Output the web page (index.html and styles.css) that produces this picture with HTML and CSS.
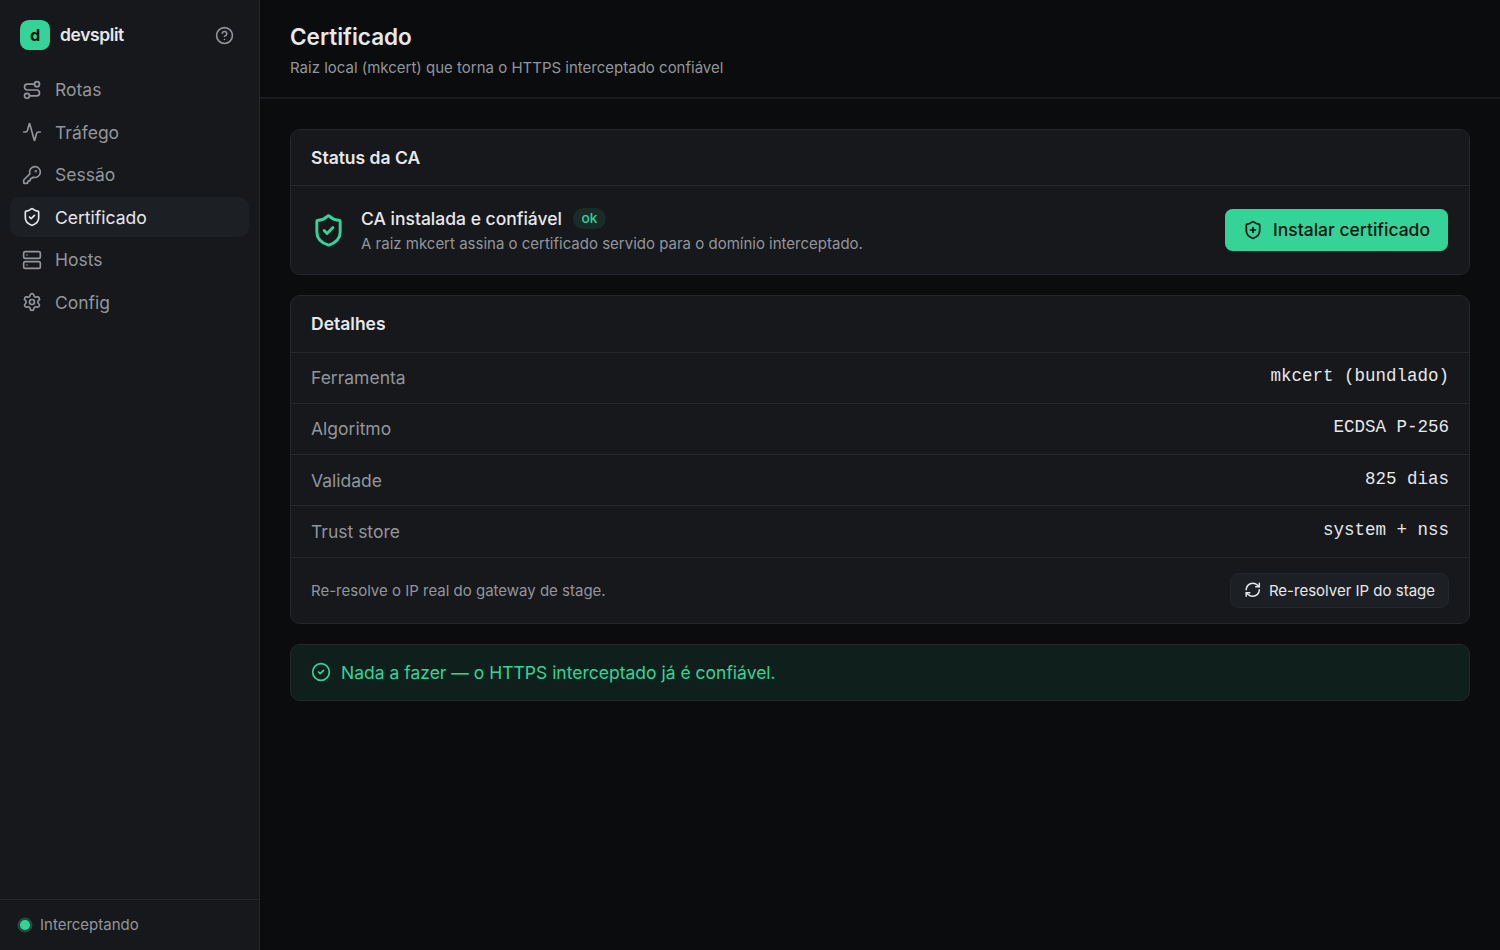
FILE: index.html
```html
<!DOCTYPE html>
<html lang="pt-BR">
<head>
<meta charset="utf-8">
<title>devsplit</title>
<link rel="stylesheet" href="styles.css">
</head>
<body>
<div class="app">
  <aside class="sidebar">
    <div class="brand">
      <span class="logo">d</span>
      <span class="brand-name">devsplit</span>
      <svg class="icon help" viewBox="0 0 24 24"><circle cx="12" cy="12" r="10"/><path d="M9.09 9a3 3 0 0 1 5.83 1c0 2-3 3-3 3"/><path d="M12 17h.01"/></svg>
    </div>
    <nav class="nav">
      <a class="nav-item"><svg class="icon" viewBox="0 0 24 24"><circle cx="6" cy="19" r="3"/><path d="M9 19h8.5a3.5 3.5 0 0 0 0-7h-11a3.5 3.5 0 0 1 0-7H15"/><circle cx="18" cy="5" r="3"/></svg>Rotas</a>
      <a class="nav-item"><svg class="icon" viewBox="0 0 24 24"><path d="M22 12h-2.48a2 2 0 0 0-1.93 1.46l-2.35 8.36a.25.25 0 0 1-.48 0L9.24 2.18a.25.25 0 0 0-.48 0l-2.35 8.36A2 2 0 0 1 4.49 12H2"/></svg>Tráfego</a>
      <a class="nav-item"><svg class="icon" viewBox="0 0 24 24"><path d="M2.586 17.414A2 2 0 0 0 2 18.828V21a1 1 0 0 0 1 1h3a1 1 0 0 0 1-1v-1a1 1 0 0 1 1-1h1a1 1 0 0 0 1-1v-1a1 1 0 0 1 1-1h.172a2 2 0 0 0 1.414-.586l.814-.814a6.5 6.5 0 1 0-4-4z"/><circle cx="16.5" cy="7.5" r=".5" fill="currentColor"/></svg>Sessão</a>
      <a class="nav-item active"><svg class="icon" viewBox="0 0 24 24"><path d="M20 13c0 5-3.5 7.5-7.66 8.95a1 1 0 0 1-.67-.01C7.5 20.5 4 18 4 13V6a1 1 0 0 1 1-1c2 0 4.5-1.2 6.24-2.72a1.17 1.17 0 0 1 1.52 0C14.51 3.81 17 5 19 5a1 1 0 0 1 1 1z"/><path d="m9 12 2 2 4-4"/></svg>Certificado</a>
      <a class="nav-item"><svg class="icon" viewBox="0 0 24 24"><rect width="20" height="8" x="2" y="2" rx="2"/><rect width="20" height="8" x="2" y="14" rx="2"/><path d="M6 6h.01M6 18h.01"/></svg>Hosts</a>
      <a class="nav-item"><svg class="icon" viewBox="0 0 24 24"><path d="M9.671 4.136a2.34 2.34 0 0 1 4.659 0 2.34 2.34 0 0 0 3.319 1.915 2.34 2.34 0 0 1 2.33 4.033 2.34 2.34 0 0 0 0 3.831 2.34 2.34 0 0 1-2.33 4.033 2.34 2.34 0 0 0-3.319 1.915 2.34 2.34 0 0 1-4.659 0 2.34 2.34 0 0 0-3.32-1.915 2.34 2.34 0 0 1-2.33-4.033 2.34 2.34 0 0 0 0-3.831A2.34 2.34 0 0 1 6.35 6.051a2.34 2.34 0 0 0 3.319-1.915"/><circle cx="12" cy="12" r="3"/></svg>Config</a>
    </nav>
    <div class="status"><span class="dot"></span><span class="status-text">Interceptando</span></div>
  </aside>
  <main class="main">
    <header class="page-header">
      <h1 class="title">Certificado</h1>
      <p class="subtitle">Raiz local (mkcert) que torna o HTTPS interceptado confiável</p>
    </header>
    <div class="content">
      <section class="card">
        <h2 class="card-title">Status da CA</h2>
        <div class="ca">
          <svg class="icon ca-icon" viewBox="0 0 24 24"><path d="M20 13c0 5-3.5 7.5-7.66 8.95a1 1 0 0 1-.67-.01C7.5 20.5 4 18 4 13V6a1 1 0 0 1 1-1c2 0 4.5-1.2 6.24-2.72a1.17 1.17 0 0 1 1.52 0C14.51 3.81 17 5 19 5a1 1 0 0 1 1 1z"/><path d="m9 12 2 2 4-4"/></svg>
          <div class="ca-text">
            <div class="ca-line">CA instalada e confiável<span class="badge">ok</span></div>
            <div class="ca-note">A raiz mkcert assina o certificado servido para o domínio interceptado.</div>
          </div>
          <button class="btn primary"><svg class="icon" viewBox="0 0 24 24"><path d="M20 13c0 5-3.5 7.5-7.66 8.95a1 1 0 0 1-.67-.01C7.5 20.5 4 18 4 13V6a1 1 0 0 1 1-1c2 0 4.5-1.2 6.24-2.72a1.17 1.17 0 0 1 1.52 0C14.51 3.81 17 5 19 5a1 1 0 0 1 1 1z"/><path d="M9 12h6M12 9v6"/></svg>Instalar certificado</button>
        </div>
      </section>
      <section class="card">
        <h2 class="card-title details-title">Detalhes</h2>
        <div class="row"><span class="key">Ferramenta</span><span class="value">mkcert (bundlado)</span></div>
        <div class="row"><span class="key">Algoritmo</span><span class="value">ECDSA P-256</span></div>
        <div class="row"><span class="key">Validade</span><span class="value">825 dias</span></div>
        <div class="row"><span class="key">Trust store</span><span class="value">system + nss</span></div>
        <div class="row-action">
          <span>Re-resolve o IP real do gateway de stage.</span>
          <button class="btn secondary"><svg class="icon" viewBox="0 0 24 24"><path d="M3 12a9 9 0 0 1 9-9 9.75 9.75 0 0 1 6.74 2.74L21 8"/><path d="M21 3v5h-5"/><path d="M21 12a9 9 0 0 1-9 9 9.75 9.75 0 0 1-6.74-2.74L3 16"/><path d="M8 16H3v5"/></svg>Re-resolver IP do stage</button>
        </div>
      </section>
      <section class="card banner">
        <svg class="icon" viewBox="0 0 24 24"><circle cx="12" cy="12" r="10"/><path d="m9 12 2 2 4-4"/></svg>
        <span>Nada a fazer — o HTTPS interceptado já é confiável.</span>
      </section>
    </div>
  </main>
</div>
</body>
</html>
```
FILE: styles.css
```css
* { box-sizing: border-box; }
body {
  margin: 0;
  background: #0b0c0e;
  color: #e6e8eb;
  font: 17.5px/25px Inter, "Liberation Sans", sans-serif;
}
h1, h2, p { margin: 0; }
.app { display: flex; height: 950px; overflow: hidden; }
.icon {
  width: 20px; height: 20px; flex: none;
  fill: none; stroke: currentColor; stroke-width: 2;
  stroke-linecap: round; stroke-linejoin: round;
}
.sidebar {
  width: 260px; flex: none;
  display: flex; flex-direction: column;
  background: #16181b; border-right: 1px solid #24272b;
}
.brand { display: flex; align-items: center; height: 69.5px; padding: 0.5px 25px 0 20px; }
.logo {
  width: 30px; height: 30px; border-radius: 8.75px;
  display: grid; place-items: center;
  background: #36d399; color: #06130d;
  font-size: 16.25px; font-weight: 700; line-height: 24px; padding-bottom: 1px;
}
.brand-name { margin-left: 10px; padding-bottom: 1px; font-weight: 600; letter-spacing: -0.4px; }
.help { margin-left: auto; color: #92969b; width: 19px; height: 19px; }
.nav { flex: 1; display: flex; flex-direction: column; gap: 2.5px; padding: 0 10px; }
.nav-item {
  height: 40px; display: flex; align-items: center; gap: 12.5px;
  padding: 0 12.5px; border-radius: 10px; color: #92969b;
}
.nav-item .icon { margin: 0 0.5px 0 -0.5px; }
.nav-item.active { background: #1c1f23; color: #e6e8eb; }
.status {
  height: 51px; display: flex; align-items: center; gap: 10px;
  padding: 0 20px; border-top: 1px solid #24272b;
  color: #92969b; font-size: 15px;
}
.status-text { padding-bottom: 1px; }
.dot {
  width: 10px; height: 10px; border-radius: 50%;
  background: #36d399; box-shadow: 0 0 0 2.5px #1d4d3d;
}
.main { flex: 1; min-width: 0; }
.page-header { height: 99px; padding: 22px 30px 0; border-bottom: 2px solid #1a1c1f; }
.title { font-size: 22.5px; line-height: 30px; font-weight: 600; }
.subtitle { margin-top: 5px; color: #92969b; font-size: 15px; line-height: 22px; }
.content { padding: 30px; display: flex; flex-direction: column; gap: 20px; }
.card { background: #16181b; border: 1px solid #24272b; border-radius: 10px; }
.card-title { padding: 15px 20px; font-size: 17.5px; line-height: 25px; font-weight: 600; }
.details-title { padding-bottom: 15.5px; }
.ca {
  height: 89px; padding: 0 21px 0 20px; border-top: 1px solid #24272b;
  display: flex; align-items: center;
}
.ca-icon { width: 35px; height: 35px; color: #36d399; }
.ca-text { flex: 1; margin-left: 15px; }
.ca-line { display: flex; align-items: center; gap: 10.75px; font-weight: 500; }
.ca-note { color: #92969b; font-size: 15px; line-height: 22px; margin-top: 2px; }
.badge {
  padding: 0 8.75px; border-radius: 11px; background: #192c28; color: #36d399;
  font-size: 13.75px; line-height: 21px;
}
.btn { display: flex; align-items: center; border: 0; font: inherit; }
.primary {
  height: 42.5px; padding: 0 18px 1px; gap: 10px; border-radius: 7.5px;
  background: #36d399; color: #06130d; font-weight: 500;
}
.secondary {
  height: 35px; padding: 0 13px; gap: 7.5px; border-radius: 8.75px;
  border: 1px solid #24272b; background: #1c1f23; color: #e6e8eb;
  font-size: 15px;
}
.secondary .icon { width: 17.5px; height: 17.5px; }
.row {
  height: 51.25px; padding: 0 20px; border-top: 1px solid #24272b;
  display: flex; align-items: center; justify-content: space-between;
}
.key { color: #92969b; }
.value { font-family: "Liberation Mono", monospace; line-height: 25px; margin-bottom: 2px; }
.row-action {
  height: 66px; padding: 0 20px; border-top: 1px solid #24272b;
  display: flex; align-items: center; justify-content: space-between;
  color: #92969b; font-size: 15px;
}
.banner {
  display: flex; align-items: center; gap: 10px; height: 57px; padding: 0 20px;
  background: #0f201c; color: #36d399;
}
```
